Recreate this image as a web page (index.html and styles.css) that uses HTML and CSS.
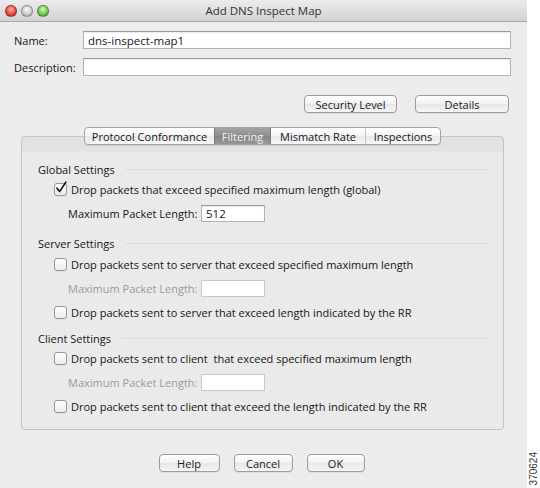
FILE: index.html
```html
<!DOCTYPE html>
<html>
<head>
<meta charset="utf-8">
<link rel="stylesheet" href="styles.css">
</head>
<body>
<div class="window">
  <div class="titlebar">
    <div class="lights">
      <span class="light red"></span>
      <span class="light grey"></span>
      <span class="light green"></span>
    </div>
    <div class="title">Add DNS Inspect Map</div>
  </div>
  <div class="content">
    <div class="field-row">
      <label class="field-label">Name:</label>
      <div class="input wide">dns-inspect-map1</div>
    </div>
    <div class="field-row">
      <label class="field-label">Description:</label>
      <div class="input wide"></div>
    </div>
    <div class="action-row">
      <button class="btn btn-security">Security Level</button>
      <button class="btn btn-details">Details</button>
    </div>
    <div class="tabs-wrap">
      <div class="tabs">
        <span class="tab tab-pc">Protocol Conformance</span>
        <span class="tab tab-filter selected">Filtering</span>
        <span class="tab tab-mm">Mismatch Rate</span>
        <span class="tab tab-insp">Inspections</span>
      </div>
    </div>
    <div class="panel">
      <div class="section">
        <div class="section-head"><span>Global Settings</span><span class="rule"></span></div>
        <div class="row cb-row">
          <span class="checkbox checked"><svg width="14" height="14" viewBox="0 0 14 14"><path d="M3 7.2 L5.6 10.6 L11.8 1.2" fill="none" stroke="#111" stroke-width="1.6" stroke-linecap="round" stroke-linejoin="round"/></svg></span>
          <span>Drop packets that exceed specified maximum length (global)</span>
        </div>
        <div class="row len-row">
          <span class="len-label">Maximum Packet Length:</span>
          <div class="input small">512</div>
        </div>
      </div>
      <div class="section sec-server">
        <div class="section-head"><span>Server Settings</span><span class="rule"></span></div>
        <div class="row cb-row">
          <span class="checkbox"></span>
          <span>Drop packets sent to server that exceed specified maximum length</span>
        </div>
        <div class="row len-row disabled">
          <span class="len-label">Maximum Packet Length:</span>
          <div class="input small"></div>
        </div>
        <div class="row cb-row">
          <span class="checkbox"></span>
          <span>Drop packets sent to server that exceed length indicated by the RR</span>
        </div>
      </div>
      <div class="section sec-client">
        <div class="section-head"><span>Client Settings</span><span class="rule"></span></div>
        <div class="row cb-row">
          <span class="checkbox"></span>
          <span>Drop packets sent to client &nbsp;that exceed specified maximum length</span>
        </div>
        <div class="row len-row disabled">
          <span class="len-label">Maximum Packet Length:</span>
          <div class="input small"></div>
        </div>
        <div class="row cb-row">
          <span class="checkbox"></span>
          <span>Drop packets sent to client that exceed the length indicated by the RR</span>
        </div>
      </div>
    </div>
    <div class="footer">
      <button class="btn btn-help">Help</button>
      <button class="btn btn-cancel">Cancel</button>
      <button class="btn btn-ok">OK</button>
    </div>
  </div>
</div>
<div class="figno">370624</div>
</body>
</html>
```
FILE: styles.css
```css
* { box-sizing: border-box; }
html, body { margin: 0; padding: 0; }
body {
  width: 540px;
  height: 488px;
  background: #ffffff;
  display: flex;
  font-family: "Open Sans", "DejaVu Sans", sans-serif;
  font-size: 11px;
  color: #161616;
  overflow: hidden;
}
.window {
  width: 527px;
  height: 488px;
  background: #ececec;
  display: flex;
  flex-direction: column;
}
.titlebar {
  height: 22px;
  flex: none;
  background: linear-gradient(#ececec, #d2d2d2);
  border-bottom: 1px solid #a9a9a9;
  display: flex;
  align-items: center;
}
.lights {
  display: flex;
  gap: 4px;
  padding-left: 5px;
  width: 60px;
}
.light {
  width: 12px;
  height: 12px;
  border-radius: 50%;
  border: 1px solid rgba(0,0,0,0.3);
}
.light.red { background: radial-gradient(circle at 50% 35%, #ffb0a8, #e0443a 60%, #b82a22); }
.light.grey { background: radial-gradient(circle at 50% 35%, #fafafa, #c8c8c8 60%, #a8a8a8); }
.light.green { background: radial-gradient(circle at 50% 35%, #d8f7b8, #6cc64a 60%, #3d9a2a); }
.title {
  flex: 1;
  text-align: center;
  padding-right: 60px;
  font-size: 11.5px;
  color: #333;
}
.content {
  flex: 1;
  display: flex;
  flex-direction: column;
  padding: 9px 16px 0 14px;
}
.field-row {
  display: flex;
  align-items: center;
  height: 18px;
  margin-bottom: 9px;
}
.field-label { width: 69px; }
.input {
  height: 18px;
  background: #fff;
  border: 1px solid #b4b4b4;
  border-top-color: #9a9a9a;
  box-shadow: inset 0 1px 1px rgba(0,0,0,0.08);
  padding: 0 4px;
  display: flex;
  align-items: center;
  font-size: 11.5px;
}
.input.wide { flex: 1; }
.input.small { width: 64px; height: 17px; margin-left: auto; }
.action-row {
  display: flex;
  justify-content: flex-end;
  gap: 18px;
  margin-top: 10px;
  padding-right: 2px;
}
.btn {
  font-family: inherit;
  font-size: 11px;
  color: #1a1a1a;
  height: 18px;
  padding: 0;
  border: 1px solid #9c9c9c;
  border-radius: 4px;
  background: linear-gradient(#ffffff, #f1f1f1 50%, #e6e6e6 51%, #f6f6f6);
  box-shadow: 0 1px 0 rgba(0,0,0,0.06);
}
.btn-security { width: 93px; }
.btn-details { width: 94px; }
.tabs-wrap {
  display: flex;
  justify-content: center;
  margin-top: 14px;
  margin-bottom: -9px;
  position: relative;
  z-index: 1;
}
.tabs {
  display: flex;
  height: 18px;
  border: 1px solid #a2a2a2;
  border-radius: 4px;
  overflow: hidden;
  background: linear-gradient(#ffffff, #f3f3f3 50%, #e9e9e9 51%, #f7f7f7);
  box-shadow: 0 1px 1px rgba(0,0,0,0.1);
}
.tab {
  display: flex;
  align-items: center;
  justify-content: center;
  border-left: 1px solid #c6c6c6;
}
.tab:first-child { border-left: none; }
.tab-pc { width: 129px; }
.tab-filter { width: 56px; }
.tab-mm { width: 95px; }
.tab-insp { width: 75px; }
.tab.selected {
  background: linear-gradient(#a4a4a4, #8e8e8e 50%, #858585 51%, #979797);
  color: #f2f2f2;
  border-left-color: #7a7a7a;
}
.tab.selected + .tab { border-left-color: #7a7a7a; }
.panel {
  margin: 0 7px 0 7px;
  height: 294px;
  border: 1px solid #c4c4c4;
  border-radius: 4px;
  background: linear-gradient(#e2e2e2 0, #e2e2e2 14px, #eaeaea 15px);
  padding: 24px 15px 0 16px;
}
.section-head {
  display: flex;
  align-items: center;
  height: 16px;
  gap: 10px;
}
.rule {
  flex: 1;
  height: 1px;
  background: #dcdcdc;
}
.row {
  display: flex;
  align-items: center;
  height: 24px;
}
.cb-row { padding-left: 16px; gap: 4px; }
.len-row { padding-left: 30px; width: 227px; }
.sec-server { margin-top: 10px; }
.sec-server .section-head { margin-bottom: 1px; }
.sec-client { margin-top: 6px; }
.checkbox {
  width: 13px;
  height: 13px;
  flex: none;
  border: 1px solid #979797;
  border-radius: 3px;
  background: linear-gradient(#ffffff, #ececec);
  box-shadow: 0 1px 0 rgba(0,0,0,0.05);
  position: relative;
}
.checkbox svg {
  position: absolute;
  left: -1px;
  top: -3px;
}
.disabled { color: #9b9b9b; }
.disabled .input { border-color: #c8c8c8; box-shadow: none; }
.footer {
  display: flex;
  justify-content: center;
  gap: 14px;
  margin-top: 24px;
  padding-right: 2px;
}
.btn-help { width: 61px; }
.btn-cancel { width: 59px; }
.btn-ok { width: 58px; }
.figno {
  align-self: flex-end;
  writing-mode: vertical-rl;
  transform: rotate(180deg);
  font-family: "Liberation Sans", Arial, sans-serif;
  font-size: 10px;
  color: #333;
  margin-left: 1px;
  margin-bottom: 3px;
  line-height: 12px;
}
```
